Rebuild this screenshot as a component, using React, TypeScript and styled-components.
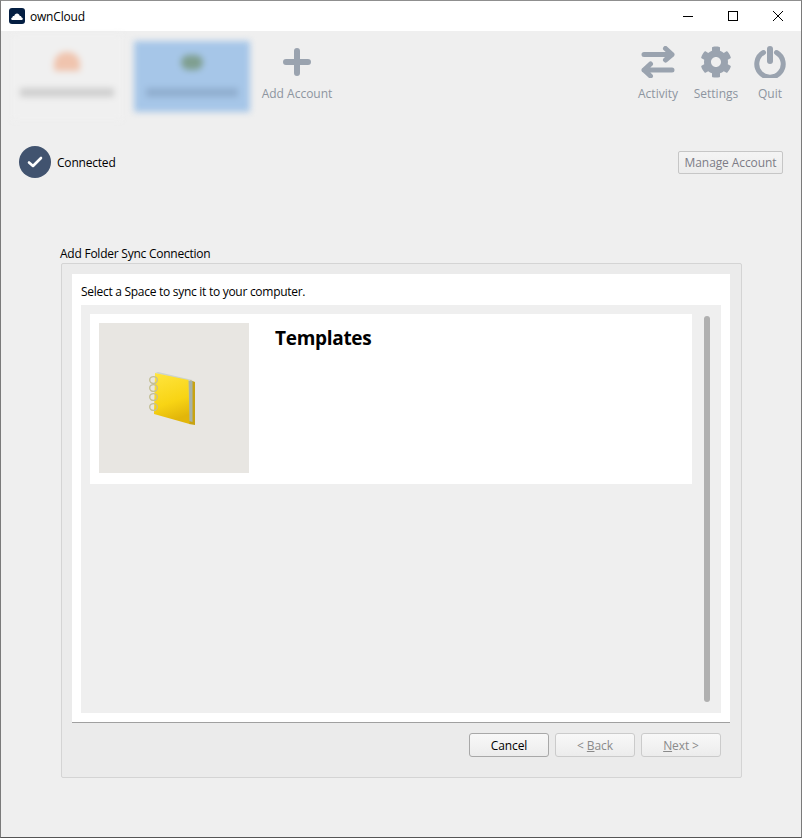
import React from "react";
import styled, { createGlobalStyle } from "styled-components";
import { FaCog } from "react-icons/fa";

const GlobalStyle = createGlobalStyle`
  html, body {
    margin: 0;
    padding: 0;
    background: #efefef;
  }
  body {
    font-family: "Open Sans", "Noto Sans", sans-serif;
    font-size: 12px;
    color: #000;
  }
`;

const Window = styled.div`
  box-sizing: border-box;
  width: 802px;
  height: 838px;
  overflow: hidden;
  display: flex;
  flex-direction: column;
  background: #efefef;
  border: 1px solid #7a7a7a;
  border-top-color: #8f8f8f;
  border-bottom-color: #555;
`;

const TitleBar = styled.div`
  height: 30px;
  flex: none;
  display: flex;
  align-items: center;
  background: #fff;
  padding-left: 8px;
`;

const AppIcon = styled.div`
  width: 16px;
  height: 16px;
  border-radius: 3px;
  background: #041e42;
  display: flex;
  align-items: center;
  justify-content: center;
`;

const AppName = styled.span`
  margin-left: 5px;
  letter-spacing: -0.2px;
`;

const WindowButtons = styled.div`
  margin-left: auto;
  padding-right: 1px;
  display: flex;
`;

const WindowButton = styled.div`
  width: 45px;
  height: 30px;
  display: flex;
  align-items: center;
  justify-content: center;
`;

const Toolbar = styled.div`
  height: 100px;
  flex: none;
  display: flex;
  align-items: flex-start;
  padding: 3px 14px 0 11px;
`;

const BlurTile = styled.div<{ $active?: boolean }>`
  box-sizing: border-box;
  width: ${(p) => (p.$active ? 116 : 110)}px;
  height: ${(p) => (p.$active ? 71 : 86)}px;
  margin: ${(p) => (p.$active ? "7px 0 0 12px" : "0")};
  padding-top: ${(p) => (p.$active ? 14 : 18)}px;
  display: flex;
  flex-direction: column;
  align-items: center;
  background: ${(p) => (p.$active ? "#a6c6e8" : "#f0f0f0")};
  filter: blur(3px);
`;

const BlurIcon = styled.div<{ $active?: boolean }>`
  width: ${(p) => (p.$active ? 22 : 26)}px;
  height: ${(p) => (p.$active ? 15 : 19)}px;
  border-radius: ${(p) => (p.$active ? "8px" : "12px 12px 2px 2px")};
  background: ${(p) => (p.$active ? "#7f9f90" : "#f0c4ae")};
`;

const BlurLabel = styled.div<{ $active?: boolean }>`
  width: ${(p) => (p.$active ? 92 : 94)}px;
  height: 9px;
  margin-top: ${(p) => (p.$active ? 18 : 17)}px;
  background: ${(p) => (p.$active ? "#90aecf" : "#cfcfcf")};
`;

const ToolItem = styled.div<{ $width: number; $left?: number }>`
  width: ${(p) => p.$width}px;
  margin-left: ${(p) => p.$left ?? 0}px;
  padding-top: 12px;
  display: flex;
  flex-direction: column;
  align-items: center;
  color: #8d95a0;
  white-space: nowrap;
`;

const ToolIcon = styled.div`
  height: 32px;
  display: flex;
  align-items: center;
  justify-content: center;
  margin-bottom: 7px;
`;

const Spacer = styled.div`
  flex: 1;
`;

const StatusRow = styled.div`
  height: 32px;
  flex: none;
  margin-top: 12px;
  padding: 0 18px;
  display: flex;
  align-items: center;
`;

const StatusDot = styled.div`
  width: 32px;
  height: 32px;
  border-radius: 50%;
  background: #41536f;
  display: flex;
  align-items: center;
  justify-content: center;
`;

const StatusText = styled.span`
  margin-left: 6px;
  letter-spacing: -0.2px;
`;

const ManageButton = styled.button`
  box-sizing: border-box;
  margin-left: auto;
  margin-top: 1px;
  width: 105px;
  height: 23px;
  padding: 0;
  font: inherit;
  letter-spacing: -0.1px;
  color: #7c7c86;
  background: linear-gradient(#f4f4f4, #ececec);
  border: 1px solid #c6c6c6;
  border-radius: 2px;
`;

const SectionTitle = styled.div`
  margin: 67px 0 0 59px;
  height: 17px;
  line-height: 17px;
  letter-spacing: -0.24px;
`;

const Frame = styled.div`
  box-sizing: border-box;
  width: 681px;
  height: 515px;
  flex: none;
  margin: 1px 0 0 60px;
  padding: 10px 11px 0 10px;
  background: #ebebeb;
  border: 1px solid #d4d4d4;
  border-radius: 2px;
  display: flex;
  flex-direction: column;
`;

const Page = styled.div`
  box-sizing: border-box;
  height: 448px;
  flex: none;
  padding: 0 9px 9px;
  background: #fff;
  display: flex;
  flex-direction: column;
`;

const PageLabel = styled.div`
  height: 31px;
  flex: none;
  line-height: 36px;
  letter-spacing: -0.28px;
`;

const SpaceList = styled.div`
  flex: 1;
  background: #efefef;
  display: flex;
  padding: 9px 11px 11px 9px;
`;

const SpaceColumn = styled.div`
  flex: 1;
`;

const SpaceCard = styled.div`
  height: 170px;
  padding: 9px;
  box-sizing: border-box;
  background: #fff;
  display: flex;
`;

const Thumbnail = styled.div`
  width: 150px;
  height: 150px;
  background: #e8e6e2;
  display: flex;
  align-items: center;
  justify-content: center;
`;

const BookSvg = styled.svg`
  margin: 0 2px 2px 0;
`;

const SpaceTitle = styled.div`
  margin: 1px 0 0 26px;
  font-size: 19px;
  line-height: 28px;
  font-weight: 700;
  letter-spacing: -0.3px;
`;

const ScrollBar = styled.div`
  width: 6px;
  margin: 2px 0 0 12px;
  height: 386px;
  border-radius: 3px;
  background: #b0b0b0;
`;

const Separator = styled.div`
  height: 1px;
  flex: none;
  background: #a0a0a0;
`;

const ButtonRow = styled.div`
  display: flex;
  justify-content: flex-end;
  gap: 6px;
  padding: 10px 9px 0 0;
`;

const WizardButton = styled.button<{ $enabled?: boolean }>`
  box-sizing: border-box;
  width: 80px;
  height: 24px;
  padding: 0;
  font: inherit;
  letter-spacing: -0.1px;
  color: ${(p) => (p.$enabled ? "#000" : "#8a8a8a")};
  background: linear-gradient(#f8f8f8, #ececec);
  border: 1px solid ${(p) => (p.$enabled ? "#a8a8a8" : "#cbcbcb")};
  border-radius: 3px;
`;

const Mnemonic = styled.span`
  text-decoration: underline;
`;

const CloudLogo = () => (
  <svg width="12" height="7" viewBox="0 0 12 7">
    <path
      d="M1.200 7C-0.200 7 -0.200 4.600 1.400 4.500 1.500 3.300 2.500 2.900 3.200 3.200 3.500 1.400 4.700 0.400 6 0.400 7.400 0.400 8.500 1.400 8.800 3.100 9.700 2.800 10.500 3.500 10.600 4.500 12.200 4.600 12.200 7 10.800 7Z"
      fill="#fff"
    />
  </svg>
);

const Notebook = () => (
  <BookSvg width="56" height="60" viewBox="0 0 56 60">
    <defs>
      <linearGradient id="cover" x1="0" y1="0" x2="0.25" y2="1">
        <stop offset="0" stopColor="#ffe53f" />
        <stop offset="0.65" stopColor="#f8d414" />
        <stop offset="1" stopColor="#e2b60a" />
      </linearGradient>
    </defs>
    <path d="M45 13 50 15 50 58 44 57Z" fill="#c8a312" />
    <path d="M43 13 47.500 14 47.500 55 44 54Z" fill="#a7b2a9" />
    <path d="M10 6 13 5 47.500 13 43 14Z" fill="#cdd4cd" />
    <path d="M10 6 43.500 13 44.500 57 9 47Z" fill="url(#cover)" />
    {[13, 21, 30, 40].map((y) => (
      <ellipse key={y} cx="8.500" cy={y} rx="3.800" ry="3.400" fill="none" stroke="#c4bf96" strokeWidth="1.400" />
    ))}
  </BookSvg>
);

const App: React.FC = () => {
  return (
    <Window>
      <GlobalStyle />
      <TitleBar>
        <AppIcon>
          <CloudLogo />
        </AppIcon>
        <AppName>ownCloud</AppName>
        <WindowButtons>
          <WindowButton>
            <svg width="10" height="10" viewBox="0 0 10 10">
              <path d="M0 5.500H10" stroke="#000" strokeWidth="1" />
            </svg>
          </WindowButton>
          <WindowButton>
            <svg width="10" height="10" viewBox="0 0 10 10">
              <rect x="0.500" y="0.500" width="9" height="9" fill="none" stroke="#000" strokeWidth="1" />
            </svg>
          </WindowButton>
          <WindowButton>
            <svg width="10" height="10" viewBox="0 0 10 10">
              <path d="M0 0 10 10M10 0 0 10" stroke="#000" strokeWidth="1" />
            </svg>
          </WindowButton>
        </WindowButtons>
      </TitleBar>

      <Toolbar>
        <BlurTile>
          <BlurIcon />
          <BlurLabel />
        </BlurTile>
        <BlurTile $active>
          <BlurIcon $active />
          <BlurLabel $active />
        </BlurTile>
        <ToolItem $width={94}>
          <ToolIcon>
            <svg width="28" height="28" viewBox="0 0 28 28">
              <path d="M14 3V25M3 14H25" stroke="#9aa3af" strokeWidth="6" strokeLinecap="round" />
            </svg>
          </ToolIcon>
          Add Account
        </ToolItem>
        <Spacer />
        <ToolItem $width={56}>
          <ToolIcon>
            <svg width="34" height="32" viewBox="0 0 34 32" fill="none" stroke="#9aa3af" strokeWidth="5" strokeLinecap="round" strokeLinejoin="round">
              <path d="M3 8.500H31M24.500 2.500 31 8.500 24.500 14" />
              <path d="M31 24H3M9.500 18 3 24 9.500 30" />
            </svg>
          </ToolIcon>
          Activity
        </ToolItem>
        <ToolItem $width={60}>
          <ToolIcon>
            <FaCog size={32} color="#9aa3af" />
          </ToolIcon>
          Settings
        </ToolItem>
        <ToolItem $width={34} $left={7}>
          <ToolIcon>
            <svg width="32" height="32" viewBox="0 0 32 32" fill="none" stroke="#9aa3af" strokeWidth="5" strokeLinecap="round">
              <path d="M9.500 6.500A13.200 13.200 0 1 0 22.500 6.500" />
              <path d="M16 3V15" strokeWidth="6" />
            </svg>
          </ToolIcon>
          Quit
        </ToolItem>
      </Toolbar>

      <StatusRow>
        <StatusDot>
          <svg width="16" height="12" viewBox="0 0 16 12" fill="none">
            <path d="M2 6.500 6 10 14 2" stroke="#fff" strokeWidth="2.600" strokeLinecap="round" strokeLinejoin="round" />
          </svg>
        </StatusDot>
        <StatusText>Connected</StatusText>
        <ManageButton>Manage Account</ManageButton>
      </StatusRow>

      <SectionTitle>Add Folder Sync Connection</SectionTitle>
      <Frame>
        <Page>
          <PageLabel>Select a Space to sync it to your computer.</PageLabel>
          <SpaceList>
            <SpaceColumn>
              <SpaceCard>
                <Thumbnail>
                  <Notebook />
                </Thumbnail>
                <SpaceTitle>Templates</SpaceTitle>
              </SpaceCard>
            </SpaceColumn>
            <ScrollBar />
          </SpaceList>
        </Page>
        <Separator />
        <ButtonRow>
          <WizardButton $enabled>Cancel</WizardButton>
          <WizardButton>
            &lt; <Mnemonic>B</Mnemonic>ack
          </WizardButton>
          <WizardButton>
            <Mnemonic>N</Mnemonic>ext &gt;
          </WizardButton>
        </ButtonRow>
      </Frame>
    </Window>
  );
};

export default App;
